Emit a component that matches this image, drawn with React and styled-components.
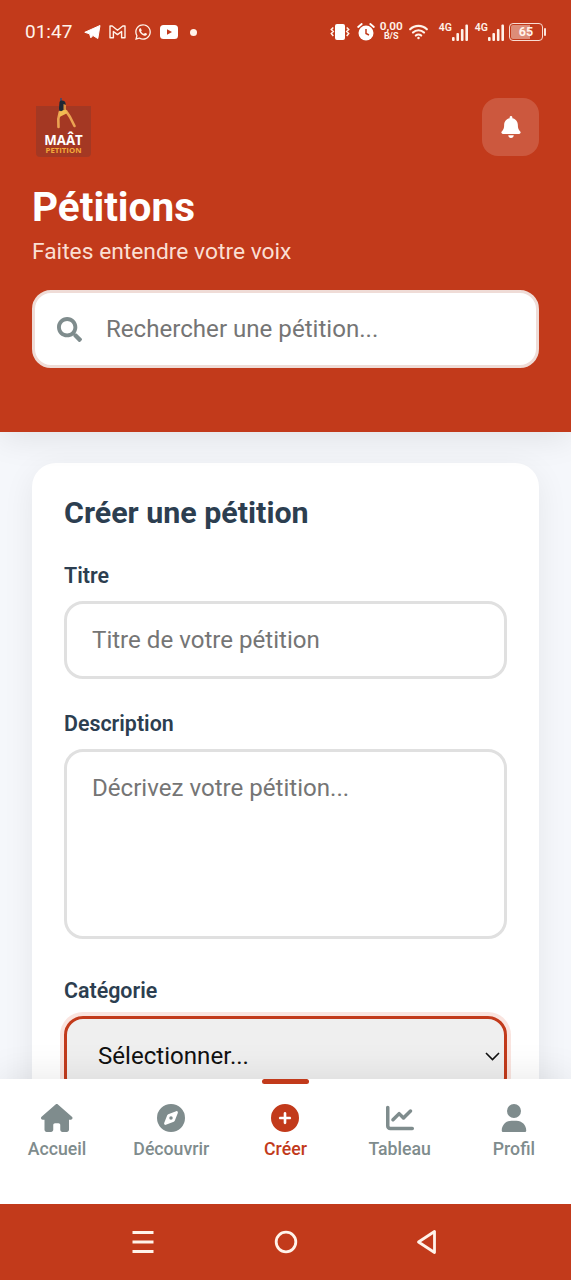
import React from "react";
import styled, { createGlobalStyle, css } from "styled-components";
import {
  FaCompass,
  FaCirclePlus,
  FaChartLine,
  FaUser,
  FaBell,
  FaWhatsapp,
} from "react-icons/fa6";
import { FaSearch } from "react-icons/fa";

const brand = "#c23a1b";
const ink = "#2c3e50";
const muted = "#7f8c8d";

const Global = createGlobalStyle`
  *, *::before, *::after { box-sizing: border-box; }
  body { margin: 0; background: #f5f7fb; font-family: Roboto, "Liberation Sans", sans-serif; }
  input, textarea, select { font-family: inherit; outline: none; margin: 0; }
`;

const Screen = styled.div`
  display: flex;
  flex-direction: column;
  width: 571px;
  height: 1280px;
  overflow: hidden;
  background: #f5f7fb;
`;

const StatusBar = styled.div`
  display: flex;
  flex: none;
  justify-content: space-between;
  align-items: center;
  height: 64px;
  padding: 0 25px 0 25px;
  background: ${brand};
  color: #fff3ea;
  position: relative;
  z-index: 2;
`;

const StatusGroup = styled.div`
  display: flex;
  align-items: center;
  gap: ${(p) => p.$gap}px;
  svg { display: block; flex: none; }
`;

const Clock = styled.span`
  font-size: 19px;
  line-height: 24px;
  width: 49px;
  margin-right: 2px;
  white-space: nowrap;
`;

const Dot = styled.span`
  width: 7px;
  height: 7px;
  margin-left: 4px;
  border-radius: 50%;
  background: #fff3ea;
`;

const Speed = styled.div`
  display: flex;
  flex-direction: column;
  align-items: center;
  width: 23px;
  margin: -4px -1px 0 -2px;
  font-size: 11.8px;
  font-weight: 600;
  line-height: 12px;
  white-space: nowrap;
`;

const SpeedUnit = styled.span`
  font-size: 9px;
  font-weight: 700;
  line-height: 8px;
`;

const Signal = styled.div`
  display: flex;
  align-items: flex-start;
  height: 18px;
  margin-left: ${(p) => p.$offset || 0}px;
  font-size: 10.5px;
  font-weight: 600;
  line-height: 10px;
`;

const Battery = styled.div`
  display: flex;
  align-items: center;
  gap: 1px;
  margin-left: -2px;
  &::after {
    content: "";
    width: 2px;
    height: 8px;
    border-radius: 1px;
    background: #fbe3da;
  }
`;

const BatteryBody = styled.div`
  display: flex;
  align-items: center;
  justify-content: center;
  width: 34px;
  height: 18px;
  padding: 1px;
  border: 1.5px solid #f9dcd2;
  border-radius: 4px;
  background: linear-gradient(90deg, #dd8d78 0 62%, transparent 62%);
  background-clip: content-box;
  font-size: 12.5px;
  font-weight: 700;
  line-height: 14px;
`;

const Header = styled.header`
  display: flex;
  flex: none;
  flex-direction: column;
  height: 368px;
  padding: 34px 32px 0;
  background: ${brand};
  color: #fff;
  box-shadow: 0 6px 32px rgba(0, 0, 0, 0.09);
  position: relative;
  z-index: 1;
`;

const HeaderTop = styled.div`
  display: flex;
  justify-content: space-between;
  height: 60px;
`;

const Logo = styled.div`
  display: flex;
  flex-direction: column;
  align-items: center;
  width: 55px;
  height: 59px;
  margin-left: 4px;
  background: linear-gradient(transparent 8px, #a43823 8px);
  border-radius: 4px;
  svg { display: block; flex: none; }
`;

const LogoName = styled.span`
  font-family: "Open Sans", sans-serif;
  font-size: 13.3px;
  font-weight: 700;
  line-height: 12px;
  color: #fff;
`;

const LogoSub = styled.span`
  font-family: "Open Sans", sans-serif;
  font-size: 7.8px;
  font-weight: 700;
  line-height: 8px;
  color: #f3a93a;
`;

const BellButton = styled.button`
  display: flex;
  align-items: center;
  justify-content: center;
  width: 57px;
  height: 58px;
  padding: 0 0 1px;
  border: 0;
  border-radius: 16px;
  background: #cc583e;
  color: #fff;
`;

const Title = styled.h1`
  margin: 26px 0 0;
  font-size: 40.5px;
  font-weight: 700;
  line-height: 46px;
`;

const Subtitle = styled.p`
  margin: 9px 0 0;
  font-size: 22.8px;
  line-height: 26px;
  color: #fadfd3;
`;

const controlStyle = css`
  display: block;
  width: 100%;
  border: 3px solid #e0e0e0;
  border-radius: 19px;
  background: #fff;
  font-size: 24.1px;
  color: #000;
  &::placeholder { color: #757575; opacity: 1; }
`;

const SearchBox = styled.label`
  ${controlStyle}
  display: flex;
  align-items: center;
  gap: 24px;
  height: 78px;
  margin-top: 25px;
  padding: 0 22px;
  border-color: #efdcd7;
  svg { flex: none; color: ${muted}; }
`;

const SearchInput = styled.input`
  flex: 1;
  min-width: 0;
  padding: 0;
  border: 0;
  background: transparent;
  font-size: 24.1px;
  &::placeholder { color: #757575; opacity: 1; }
`;

const Main = styled.main`
  flex: 1;
  min-height: 0;
  padding: 31px 32px 0;
  overflow: hidden;
`;

const Card = styled.form`
  display: flex;
  flex-direction: column;
  height: 900px;
  padding: 31px 32px 30px;
  border-radius: 24px;
  background: #fff;
  box-shadow: 0 8px 32px rgba(0, 0, 0, 0.07);
`;

const CardTitle = styled.h2`
  margin: 0 0 31px;
  font-size: 30.4px;
  font-weight: 700;
  line-height: 38px;
  color: ${ink};
`;

const Field = styled.div`
  display: flex;
  flex-direction: column;
  gap: 13px;
  margin-bottom: ${(p) => p.$gap}px;
`;

const Label = styled.label`
  font-size: 21.4px;
  font-weight: 600;
  line-height: 25px;
  color: ${ink};
`;

const TextInput = styled.input`
  ${controlStyle}
  height: 78px;
  padding: 0 25px;
`;

const TextArea = styled.textarea`
  ${controlStyle}
  height: 190px;
  padding: 22px 25px;
  line-height: 28px;
  resize: none;
  background: radial-gradient(circle, #555 0 1px, transparent 1.4px) right 2px bottom 2px / 3px 3px no-repeat #fff;
`;

const SelectFrame = styled.div`
  ${controlStyle}
  display: flex;
  align-items: center;
  height: 80px;
  padding-right: 4px;
  border-color: ${brand};
  background: #efefef;
  box-shadow: 0 0 0 4px #fae4df;
  svg { flex: none; }
`;

const Select = styled.select`
  flex: 1;
  appearance: none;
  padding: 0 0 0 31px;
  border: 0;
  background: transparent;
  font-size: 24.1px;
  color: #111;
`;

const TabBar = styled.nav`
  display: grid;
  flex: none;
  grid-template-columns: repeat(5, 1fr);
  height: 125px;
  background: #fff;
  box-shadow: 0 -6px 32px rgba(0, 0, 0, 0.08);
  position: relative;
  z-index: 1;
`;

const Tab = styled.a`
  display: flex;
  flex-direction: column;
  align-items: center;
  color: ${(p) => (p.$active ? brand : muted)};
  font-size: 17.7px;
  font-weight: 500;
  line-height: 22px;
  &::before {
    content: "";
    width: 47px;
    height: 5px;
    margin-bottom: 20px;
    border-radius: 3px;
    background: ${(p) => (p.$active ? brand : "transparent")};
  }
  svg { display: block; width: auto; height: 28px; margin-bottom: 6px; }
`;

const SystemBar = styled.div`
  display: flex;
  flex: none;
  align-items: center;
  justify-content: center;
  gap: 114.500px;
  height: 76px;
  background: ${brand};
  position: relative;
  z-index: 2;
`;

const HouseIcon = () => (
  <svg width="31.500" height="28" viewBox="0 0 576 512" fill="currentColor">
    <path d="M575.8 255.5c0 18-15 32.1-32 32.1h-32l.7 160.2c0 2.700-.2 5.400-.5 8.100V472c0 22.100-17.900 40-40 40H456c-1.100 0-2.200 0-3.300-.1c-1.400 .1-2.800 .1-4.200 .1H416 392c-22.100 0-40-17.900-40-40V448 384c0-17.700-14.300-32-32-32H256c-17.700 0-32 14.300-32 32v64 24c0 22.100-17.900 40-40 40H160 128.100c-1.500 0-3-.1-4.500-.2c-1.200 .1-2.400 .2-3.600 .2H104c-22.100 0-40-17.900-40-40V360c0-.9 0-1.900 .1-2.800V287.600H32c-18 0-32-14-32-32.100c0-9 3-17 10-24L266.400 8c7-7 15-8 22-8s15 2 21 7L564.800 231.500c8 7 12 15 11 24z" />
  </svg>
);

const tabs = [
  { label: "Accueil", Icon: HouseIcon },
  { label: "Découvrir", Icon: FaCompass },
  { label: "Créer", Icon: FaCirclePlus, active: true },
  { label: "Tableau", Icon: FaChartLine },
  { label: "Profil", Icon: FaUser },
];

const SignalBars = () => (
  <svg width="16" height="18" viewBox="0 0 16 18" fill="#fff3ea">
    <rect x="0" y="14" width="2.6" height="4" rx="1" />
    <rect x="4.4" y="10" width="2.6" height="8" rx="1" />
    <rect x="8.9" y="6" width="2.6" height="12" rx="1" />
    <rect x="13.4" y="1.5" width="2.6" height="16.5" rx="1" />
  </svg>
);

const LogoFigure = () => (
  <svg width="36" height="36" viewBox="0 0 36 36" fill="none">
    <path d="M15 0v4" stroke="#4b4a68" strokeWidth="1.800" />
    <path d="M13.500 4c1-2 5-2 6 1l.5 5-2 2-1 3h-3.500l-.5-5z" fill="#1d2733" />
    <path d="M17.500 6l2.500 1v4l-2.500 1z" fill="#d78b3f" />
    <path d="M13.800 14l-1.500 7 .2 8M20 13l4 6 4.500 9" stroke="#eba352" strokeWidth="2.600" strokeLinecap="round" strokeLinejoin="round" />
    <path d="M13.500 14l6-3 2 4-4 2-4 2z" fill="#f1bc52" />
  </svg>
);

export default function App() {
  return (
    <>
      <Global />
      <Screen>
        <StatusBar>
          <StatusGroup $gap={8}>
            <Clock>01:47</Clock>
            <svg width="17" height="16" viewBox="0 0 17 16" fill="#fff" stroke="#fff" strokeWidth="1" strokeLinejoin="round">
              <path d="M.8 8.300L16 1.500 13.800 14.500 9 11.500 6.800 13.800 5.600 9.800z" />
            </svg>
            <svg width="17" height="14" viewBox="0 0 17 14" fill="none" stroke="#fff3ea" strokeWidth="1.400" strokeLinejoin="round">
              <path d="M1 12.800V1h2.200l5.300 4.300L13.800 1H16v11.800h-3.400V6.500L8.500 9.600 4.400 6.500v6.300z" />
            </svg>
            <FaWhatsapp size={18} />
            <svg width="18" height="14" viewBox="0 0 18 14">
              <rect width="18" height="14" rx="3.500" fill="#fff" />
              <path d="M7 4.200v5.600L12 7z" fill={brand} />
            </svg>
            <Dot />
          </StatusGroup>
          <StatusGroup $gap={7}>
            <svg width="20" height="16" viewBox="0 0 20 16" fill="none" stroke="#fff3ea" strokeWidth="1.500">
              <rect x="5" y="0" width="10" height="16" rx="2" fill="#fff" stroke="none" />
              <path d="M3.300 3.500L1.300 5.500l2 2-2 2 2 2.500M16.700 3.500l2 2-2 2 2 2-2 2.500" />
            </svg>
            <svg width="18" height="18" viewBox="0 0 18 18" fill="none">
              <circle cx="9" cy="10" r="7.500" fill="#fff" />
              <path d="M1.200 4l3.500-3M16.800 4l-3.500-3" stroke="#fff" strokeWidth="1.900" strokeLinecap="round" />
              <path d="M9 6v4.500l3 1.500" stroke={brand} strokeWidth="1.500" />
            </svg>
            <Speed>
              0,00
              <SpeedUnit>B/S</SpeedUnit>
            </Speed>
            <svg width="19" height="16" viewBox="0 0 20 16" fill="none" stroke="#fff3ea" strokeWidth="2.200" strokeLinecap="round">
              <path d="M1.200 5.200a12.500 12.500 0 0 1 17.600 0M4.200 8.600a8.300 8.300 0 0 1 11.600 0M7.200 11.800a4 4 0 0 1 5.600 0" />
              <circle cx="10" cy="14.200" r="1.300" fill="#fff3ea" stroke="none" />
            </svg>
            <Signal $offset={4}>4G<SignalBars /></Signal>
            <Signal>4G<SignalBars /></Signal>
            <Battery>
              <BatteryBody>65</BatteryBody>
            </Battery>
          </StatusGroup>
        </StatusBar>

        <Header>
          <HeaderTop>
            <Logo>
              <LogoFigure />
              <LogoName>MAÂT</LogoName>
              <LogoSub>PETITION</LogoSub>
            </Logo>
            <BellButton aria-label="Notifications">
              <FaBell size={22} />
            </BellButton>
          </HeaderTop>
          <Title>Pétitions</Title>
          <Subtitle>Faites entendre votre voix</Subtitle>
          <SearchBox>
            <FaSearch size={25} />
            <SearchInput placeholder="Rechercher une pétition..." />
          </SearchBox>
        </Header>

        <Main>
          <Card>
            <CardTitle>Créer une pétition</CardTitle>
            <Field $gap={32}>
              <Label htmlFor="titre">Titre</Label>
              <TextInput id="titre" placeholder="Titre de votre pétition" />
            </Field>
            <Field $gap={39}>
              <Label htmlFor="description">Description</Label>
              <TextArea id="description" placeholder="Décrivez votre pétition..." />
            </Field>
            <Field $gap={32}>
              <Label htmlFor="categorie">Catégorie</Label>
              <SelectFrame>
                <Select id="categorie">
                  <option>Sélectionner...</option>
                </Select>
                <svg width="15" height="9" viewBox="0 0 15 9" fill="none" stroke="#111" strokeWidth="1.600">
                  <path d="M1 1l6.500 6.500L14 1" />
                </svg>
              </SelectFrame>
            </Field>
          </Card>
        </Main>

        <TabBar>
          {tabs.map(({ label, Icon, active }) => (
            <Tab key={label} $active={active}>
              <Icon />
              {label}
            </Tab>
          ))}
        </TabBar>

        <SystemBar>
          <svg width="28" height="28" viewBox="0 0 28 28" stroke="#fff3ea" strokeWidth="3">
            <path d="M3.500 4.500h21M3.500 14h21M3.500 23.500h21" />
          </svg>
          <svg width="28" height="28" viewBox="0 0 28 28" fill="none" stroke="#fff3ea" strokeWidth="2.800">
            <circle cx="14" cy="14" r="9.800" />
          </svg>
          <svg width="28" height="28" viewBox="0 0 28 28" fill="none" stroke="#fff3ea" strokeWidth="2.800" strokeLinejoin="round">
            <path d="M4.500 14L20.500 3.500v21z" />
          </svg>
        </SystemBar>
      </Screen>
    </>
  );
}
